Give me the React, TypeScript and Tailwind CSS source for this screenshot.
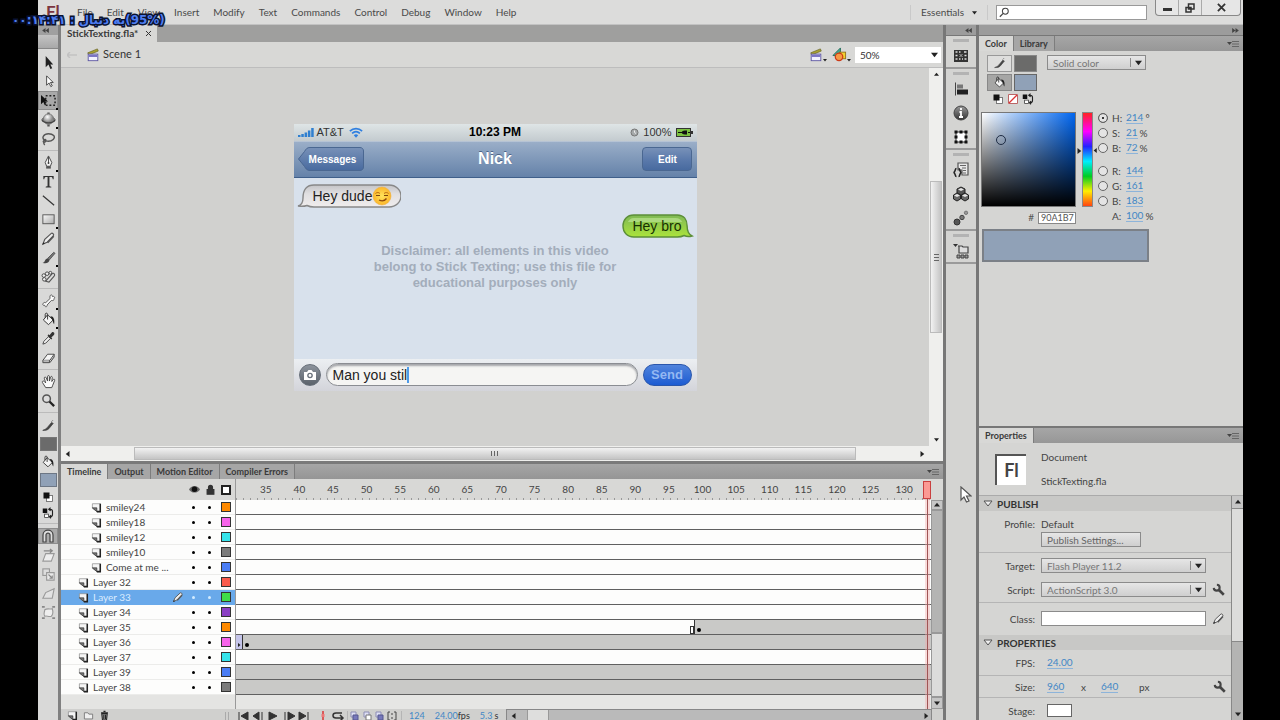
import React, { useState } from 'react';
import clsx from 'clsx';

const menus = ['File', 'Edit', 'View', 'Insert', 'Modify', 'Text', 'Commands', 'Control', 'Debug', 'Window', 'Help'];

const layers = [
  { name: 'smiley24', color: 'bg-[#ff8a00]', nested: true, frames: 'empty' },
  { name: 'smiley18', color: 'bg-[#f763ea]', nested: true, frames: 'empty' },
  { name: 'smiley12', color: 'bg-[#35e3ea]', nested: true, frames: 'empty' },
  { name: 'smiley10', color: 'bg-[#7b7b7b]', nested: true, frames: 'empty' },
  { name: 'Come at me ...', color: 'bg-[#4a7df5]', nested: true, frames: 'empty' },
  { name: 'Layer 32', color: 'bg-[#fa5a4c]', nested: false, frames: 'empty' },
  { name: 'Layer 33', color: 'bg-[#3fdc49]', nested: false, frames: 'empty' },
  { name: 'Layer 34', color: 'bg-[#8a3fc4]', nested: false, frames: 'empty' },
  { name: 'Layer 35', color: 'bg-[#ff8a00]', nested: false, frames: 'split' },
  { name: 'Layer 36', color: 'bg-[#f763ea]', nested: false, frames: 'key' },
  { name: 'Layer 37', color: 'bg-[#35e3ea]', nested: false, frames: 'empty' },
  { name: 'Layer 39', color: 'bg-[#4a7df5]', nested: false, frames: 'filled' },
  { name: 'Layer 38', color: 'bg-[#7b7b7b]', nested: false, frames: 'filled' },
];

const frameNumbers = Array.from({ length: 20 }, (_, i) => 35 + i * 5);

const toolGroups = [
  ['select', 'subselect', 'transform', 'rotate3d', 'lasso'],
  ['pen', 'text', 'line', 'rect', 'pencil', 'brush', 'deco'],
  ['bone', 'bucket', 'eyedropper', 'eraser'],
  ['hand', 'zoom'],
];
const withFlyout = ['transform', 'rotate3d', 'pen', 'rect', 'brush', 'bone', 'bucket'];

const dark = '#333';

const shapes: Record<string, React.ReactNode> = {
  select: <path d="M5 1v12l3-3 2 5 2-1-2-4h3z" fill="#222" />,
  subselect: <path d="M6 2v10l2.5-2.5 2 4 1.5-1-2-3.500h3z" fill="#fff" stroke="#333" strokeWidth=".9" />,
  transform: (
    <>
      <rect x="5" y="3" width="10" height="10" fill="none" stroke="#222" strokeWidth="1.600" strokeDasharray="2 2" />
      <path d="M0 2v10l2.500-2.500 1.500 3.500 1.500-.7L4 9h3.500z" fill="#111" />
    </>
  ),
  rotate3d: (
    <>
      <path d="M1 8c0-3 14-3 14 0s-14 3-14 0z" fill="#999" stroke="#555" />
      <path d="M8 .500v3M8 13v2.500" stroke="#555" strokeWidth="2.500" />
      <circle cx="8" cy="7.500" r="5.500" fill="url(#ball)" stroke="#777" />
      <path d="M1 8.500c2 4 12 4 14 0" fill="none" stroke="#444" strokeWidth="1.300" />
    </>
  ),
  lasso: <path d="M4 10C0 7 3 3 8 3s8 3 5 6-8 2-9 1c-2 0-2 2-.5 2S6 9.500 4.500 9 2 13 4 15" fill="none" stroke="#555" strokeWidth="1.500" />,
  pen: (
    <>
      <path d="M8 1 4.500 8 6 12h4l1.500-4z" fill="#f5f5f5" stroke="#444" />
      <path d="M8 2v6" stroke="#444" />
      <circle cx="8" cy="8.500" r="1" fill="#333" />
      <path d="M5.500 12h5v2.500h-5z" fill="#555" />
    </>
  ),
  text: <path d="M2.500 2h11v3.500h-1c-.3-1.700-.8-2.200-2-2.200H9v9c0 1 .5 1.200 2 1.200v1H5v-1c1.500 0 2-.2 2-1.200v-9H5.500c-1.200 0-1.700.5-2 2.200h-1z" fill={dark} />,
  line: <path d="m2 3 12 10" stroke={dark} strokeWidth="1.300" />,
  rect: <rect x="2" y="3" width="12" height="9.500" fill="url(#plate)" stroke="#555" />,
  pencil: (
    <>
      <path d="M2 14 4 9l7-6.500c1-.8 3.200 1.200 2.300 2.400L6.500 12z" fill="#eee" stroke="#555" strokeWidth="1.200" />
      <path d="m7 12.500 6.500-7" stroke="#555" strokeWidth="1.800" />
      <path d="m1.500 14.500 1-2.500 1.500 1.500z" fill="#222" />
    </>
  ),
  brush: (
    <>
      <path d="m7 9 6.500-6.500 1.500 1-6 7z" fill="#777" stroke="#444" strokeWidth=".8" />
      <path d="M1.500 13.500c3 .5 2-4 5.500-4.500l2 1.500c0 3-3.500 4.500-7.500 3z" fill="#444" />
    </>
  ),
  deco: (
    <>
      <path d="m5 13 7-8c1.500-1.500 3.500 1 2 2.500L8.500 14z" fill="#ddd" stroke="#555" strokeWidth="1.200" />
      <circle cx="3" cy="7" r="1.900" fill="#eee" stroke="#444" />
      <circle cx="6.500" cy="5" r="1.900" fill="#eee" stroke="#444" />
      <circle cx="10" cy="4" r="1.500" fill="#eee" stroke="#444" />
      <circle cx="3.500" cy="11" r="1.900" fill="#eee" stroke="#444" />
    </>
  ),
  bone: <path d="M2.500 11c-1.500 1 0 3 1.500 2 0 2.500 3 2 2.500-.2L11 8c1 .5 3.500-.2 3-2 1.500-1.500-.5-3-1.800-2.200C12.500 1.500 9.500 1.500 9.500 4c0 .8 0 1.200.3 1.700L5 10.300c-.8-.5-2.300-.3-2.500.7z" fill="#fafafa" stroke="#555" />,
  bucket: (
    <>
      <path d="m7 3 6 5.500-5 5L2.500 8.500z" fill="#f4f4f4" stroke="#333" />
      <path d="M10 4.500c3-.5 5 3 4 8.500-1.500-1.500-1-4-2.500-5.500z" fill="#222" />
      <path d="M7 8V2.500C7 .8 4.500.8 4.500 2.500V6" fill="none" stroke="#333" />
    </>
  ),
  eyedropper: (
    <>
      <path d="m2 14 1-3 5-5 2 2-5 5z" fill="#eee" stroke="#444" />
      <path d="m7 5 4 4 1-1-1-1 3-3c1-2-1-3.500-2.500-2.500l-2.500 3-1-1z" fill="#333" />
    </>
  ),
  eraser: (
    <>
      <path d="m2 11 5-6.500h7L9.500 11z" fill="#f5f5f5" stroke="#444" />
      <path d="M2 11v2.500h7V11M9.500 13.500 14 7.500v-3" fill="#bbb" stroke="#444" />
    </>
  ),
  hand: <path d="M5 14.500 1.500 9C1 7.500 2.500 7 3.500 8L5 9.500 3.500 4.500c-.2-1.500 1.500-1.700 2-.5L7 7.500V2.800C7 1.300 9 1.300 9 2.800V7.500l1.200-4.200c.4-1.300 2-.8 1.800.5L11.500 8l1.500-2c.8-1 2-.3 1.500 1L12.500 12l-1 2.500z" fill="#fafafa" stroke="#444" />,
  zoom: (
    <>
      <circle cx="6" cy="6" r="4" fill="#ddd" stroke="#555" strokeWidth="1.600" />
      <path d="m9 9 5 5" stroke="#222" strokeWidth="2.400" />
    </>
  ),
  stroke: <path d="M2 13c2-1 3-1 5-3l5-6 2 1-5 6c-2 2-4 2-7 2zM12 3l1.500-1.500" fill="#444" stroke="#444" strokeWidth=".8" />,
  bw: (
    <>
      <rect x="6" y="6" width="8" height="8" fill="#fff" stroke="#555" />
      <rect x="2" y="2" width="8" height="8" fill="#111" />
    </>
  ),
  swap: (
    <>
      <rect x="1" y="2" width="6" height="6" fill="#111" />
      <rect x="3.500" y="9.500" width="5" height="4.500" fill="#fff" stroke="#333" />
      <path d="M9 3h2c2.500 0 3 2 3 3v4c0 2-1 3-3 3M11.500 1 9 3l2.500 2M12 11l-2 2 2 2" fill="none" stroke="#222" strokeWidth="1.500" />
    </>
  ),
  magnet: <path d="M3 14V7c0-6.500 10-6.500 10 0v7h-3V7c0-2.500-4-2.500-4 0v7z" fill="#ddd" stroke="#444" strokeWidth="1.200" />,
  smooth: (
    <>
      <path d="m2 14 3-8h9l-3 8z" fill="#eee" stroke="#999" strokeWidth="1.200" />
      <path d="M3 3h9M9.500 1 12 3 9.500 5" fill="none" stroke="#888" strokeWidth="1.300" />
    </>
  ),
  straighten: (
    <>
      <rect x="2" y="2" width="7" height="7" fill="#ddd" stroke="#999" strokeWidth="1.200" />
      <path d="M6 6h8v8H6z" fill="#e9e9e9" stroke="#999" strokeWidth="1.200" />
      <path d="m8 8 4 4m0-3v3H9" fill="none" stroke="#888" strokeWidth="1.200" />
    </>
  ),
  skew: <path d="m2 13 3-6 9-4-2 10z" fill="#e2e2e2" stroke="#999" strokeWidth="1.200" />,
  envelope: (
    <>
      <path d="M1 2h3M12 2h3M1 14h3M12 14h3" stroke="#888" strokeWidth="2" />
      <path d="M4 5c3-2 7 0 8-1 1 3 1 6-1 8-3 1-5-1-7 0-2-3 0-4 0-7z" fill="#eee" stroke="#999" strokeWidth="1.200" />
    </>
  ),
  swatches: (
    <>
      <rect x="1" y="2" width="14" height="12" fill="#333" />
      <path d="M2.500 4h2M6 4h1.500M11 4h2.500M2.500 7.500h2M2.500 11h2M6 11h1.500M9 11h1M11.500 11h2M11.500 7.500h2" stroke="#ddd" strokeWidth="1.500" />
      <path d="m6.500 6 3 3m0-3-3 3" stroke="#aaa" />
    </>
  ),
  align: (
    <>
      <path d="M2.500 1.500v13" stroke="#444" />
      <path d="M4 3.500h6v4H4z" fill="#777" />
      <path d="M4 8.500h11v5H4z" fill="#222" />
    </>
  ),
  info: (
    <>
      <circle cx="8" cy="8" r="7" fill="url(#dome)" stroke="#444" />
      <path d="M8 3v2M6.500 7H8v5M6 12h4" fill="none" stroke="#fff" strokeWidth="1.800" />
    </>
  ),
  transformPanel: (
    <>
      <rect x="3" y="3" width="10" height="10" fill="#fff" stroke="#333" />
      <path d="M1.500 3h3M6.500 3h3M11.500 3h3M1.500 8h3M11.500 8h3M1.500 13h3M6.500 13h3M11.500 13h3" stroke="#111" strokeWidth="3" />
    </>
  ),
  snippets: (
    <>
      <path d="M5 1h10v12H9V8H5z" fill="#e8e8e8" stroke="#555" strokeWidth="1.200" />
      <path d="M7 3.500h6M9 6h4M10 8.500h3M10 11h3" stroke="#666" />
      <path d="M3.500 6.500C1.500 6.500 3 10 .5 10.500c2.500.5 1 4 3 4M5.500 6.500c2 0 .5 3.500 3 4-2.500.5-1 4-3 4" fill="none" stroke="#222" strokeWidth="1.600" />
    </>
  ),
  components: (
    <>
      <path d="m8 1 4 2v4L8 9 4 7V3z" fill="#555" stroke="#222" />
      <path d="m4 7 3.500 2v4L4 15 .5 13V9zM12 7l3.500 2v4L12 15l-3.500-2V9z" fill="#666" stroke="#222" />
      <path d="m8 2 3 1.500L8 5 5 3.500zM4 8l3 1.500L4 11 1 9.500zM12 8l3 1.500-3 1.500-3-1.500z" fill="#e5e5e5" />
    </>
  ),
  motion: (
    <>
      <circle cx="4" cy="12" r="3" fill="#555" stroke="#333" />
      <circle cx="9" cy="7.500" r="2.200" fill="#777" stroke="#444" />
      <circle cx="13" cy="2.800" r="1.700" fill="#999" stroke="#777" />
    </>
  ),
  project: (
    <>
      <path d="M0 1h5L2.500 4z" fill="#333" />
      <path d="M5 3h4l1 1h5v6H6V3" fill="#ddd" stroke="#444" strokeWidth="1.200" />
      <path d="M4 12h3v3H4zM8 12h3v3H8zM12 12h3v3h-3z" fill="#999" stroke="#444" />
    </>
  ),
  clapper: (
    <>
      <path d="M2 5.500 13 1l1 2.500L3 8z" fill="#a8a232" stroke="#5f5b18" strokeWidth=".7" />
      <rect x="2.500" y="7" width="11" height="7.500" fill="#f2f2ff" stroke="#5a53a0" />
      <path d="M3 9h10" stroke="#7b74c4" strokeWidth="2.500" />
    </>
  ),
  symbols: (
    <>
      <path d="M1 9 9 1v9z" fill="#3fa892" stroke="#27705f" />
      <rect x="8" y="5.500" width="6.500" height="7" fill="#f2d02e" stroke="#97751b" />
      <circle cx="7.500" cy="10.500" r="4" fill="#f59b45" stroke="#cc3a17" strokeWidth="1.300" />
    </>
  ),
  layer: (
    <>
      <path d="M2 2.500h11.500V14H9L2 9z" fill="#f5f5f5" stroke="#888" />
      <path d="M13.500 2.500V14H8.500" fill="none" stroke="#222" strokeWidth="2.200" />
      <path d="M2 8.500h6.500V14z" fill="#777" stroke="#333" />
    </>
  ),
  folder: <path d="M2 4h5l1.500 2H14v7H2z" fill="#eee" stroke="#777" strokeWidth="1.300" />,
  trash: <path d="M3 4h10M6.500 2h3M4 5.500h8l-1 9H5zM7 7v6M9.500 7v6" fill="#999" stroke="#222" strokeWidth="1.500" />,
  eye: (
    <>
      <path d="M0 8c3-7 13-7 16 0-3 6-13 6-16 0z" fill="#666" />
      <circle cx="8" cy="7.500" r="4" fill="#111" />
    </>
  ),
  lock: <path d="M5 8V5c0-4 6-4 6 0v3M3 8h10v7H3z" fill="#333" stroke="#333" strokeWidth="1.500" />,
  wrench: (
    <>
      <path d="M6 2.200A3.600 3.600 0 1 1 2.200 6" fill="none" stroke="#444" strokeWidth="2.600" />
      <path d="m8 8 6.500 6.500" stroke="#444" strokeWidth="3.200" />
    </>
  ),
};

function Icon({ name, className = 'size-4' }: { name: string; className?: string }) {
  return (
    <svg viewBox="0 0 16 16" className={clsx('shrink-0', className)} aria-hidden="true">
      {shapes[name]}
    </svg>
  );
}

function Caret({ dir = 'down', className = 'size-[7px]' }: { dir?: string; className?: string }) {
  const d: Record<string, string> = {
    down: 'M0 2h8L4 7z',
    up: 'M0 6h8L4 1z',
    left: 'M6 0v8L1 4z',
    right: 'M2 0v8l5-4z',
  };
  return (
    <svg viewBox="0 0 8 8" className={clsx('shrink-0', className)} aria-hidden="true">
      <path d={d[dir]} fill="#222" />
    </svg>
  );
}

function DoubleArrow({ flip = false }) {
  return (
    <svg viewBox="0 0 8 6" className={clsx('h-[5px] w-[7px]', flip && 'rotate-180')} aria-hidden="true">
      <path d="M4 0v6L0 3zM8 0v6L4 3z" fill="#444" />
    </svg>
  );
}

function PanelMenu() {
  return (
    <button aria-label="Panel menu" className="ml-auto mr-1 flex items-center">
      <svg viewBox="0 0 12 8" className="h-2 w-3" aria-hidden="true">
        <path d="M0 2h5L2.500 5z" fill="#444" />
        <path d="M5 1.500h7M5 4h7M5 6.500h7" stroke="#666" />
      </svg>
    </button>
  );
}

function Tab({ label, active = false }: { label: string; active?: boolean }) {
  return (
    <button
      className={clsx(
        'h-full border-r border-[#7d7d7d] px-[6px] text-[9px] font-bold leading-3 text-[#3a3a3a]',
        active ? 'bg-[#d8d8d6]' : 'bg-[#a6a6a6]'
      )}
    >
      {label}
    </button>
  );
}

function Dropdown({ label, value, className }: { label: string; value: string; className: string }) {
  return (
    <div className={clsx('relative flex items-center', className)}>
      <select
        aria-label={label}
        className="h-[15px] w-full appearance-none border border-[#8b8b8b] bg-linear-to-b from-[#e6e6e6] to-[#cfcfcf] pl-[5px] text-[10px] leading-3 text-[#777]"
      >
        <option>{value}</option>
      </select>
      <span className="pointer-events-none absolute right-0 flex h-[9px] w-4 items-center justify-center border-l border-[#8b8b8b]">
        <Caret />
      </span>
    </div>
  );
}

function HotText({ children }: { children: React.ReactNode }) {
  return <button className="border-b border-[#8db4da] leading-[11px] text-[#4287c6]">{children}</button>;
}

function MenuBar() {
  return (
    <header className="flex h-[25px] shrink-0 items-center border-b border-[#c2c2c2] bg-[#dcdcdb] text-[10px] text-[#4a4a4a]">
      <span className="w-8 pl-2 text-[17px] font-bold leading-5 text-[#7b3540]">Fl</span>
      <nav className="flex gap-[14px] pl-[7px]">
        {menus.map(m => (
          <button key={m}>{m}</button>
        ))}
      </nav>
      <button className="ml-auto flex items-center gap-2 border-x border-[#c9c9c9] px-[10px]">
        Essentials
        <Caret className="size-[5px]" />
      </button>
      <label className="ml-2 flex h-[15px] w-[151px] items-center border border-[#999] bg-white">
        <svg viewBox="0 0 12 12" className="ml-[2px] size-[11px]" aria-label="Search">
          <circle cx="7.500" cy="4.500" r="3.500" fill="none" stroke="#444" strokeWidth="1.200" />
          <path d="m5 7-4 4" stroke="#444" strokeWidth="1.500" />
        </svg>
        <input aria-label="Search help" className="w-full min-w-0 outline-none" />
      </label>
      <div className="ml-2 mr-[2px] flex h-4 self-start rounded-b-sm border border-t-0 border-[#888] bg-[#e6e6e6]">
        <button aria-label="Minimize" className="flex w-[23px] items-center justify-center border-r border-[#aaa]">
          <span className="mt-1 h-[3px] w-[9px] bg-[#333]" />
        </button>
        <button aria-label="Restore" className="flex w-[23px] items-center justify-center border-r border-[#aaa]">
          <svg viewBox="0 0 10 10" className="size-[10px]">
            <path d="M3.500 1h5.500v5H3.500zM1 4.500h5V9H1z" fill="#e6e6e6" stroke="#333" strokeWidth="1.500" />
          </svg>
        </button>
        <button aria-label="Close" className="flex w-[38px] items-center justify-center">
          <svg viewBox="0 0 10 10" className="size-[9px]">
            <path d="m1 1 8 8m0-8L1 9" stroke="#333" strokeWidth="2" />
          </svg>
        </button>
      </div>
    </header>
  );
}

function Toolbar() {
  const [tool, setTool] = useState('transform');
  return (
    <aside className="flex w-[23px] shrink-0 flex-col border-r-[3px] border-[#808080] bg-[#d9d9d8]">
      <div className="flex h-[10px] shrink-0 items-center bg-[#a0a0a0] pl-1">
        <DoubleArrow />
      </div>
      <div className="h-[14px] shrink-0 border-b border-[#888] bg-linear-to-b from-[#c4c4c4] to-[#a8a8a8]" />
      <div className="flex flex-col pt-1">
        {toolGroups.map(group => (
          <div key={group[0]} className="mb-[2px] border-b border-[#bbb] pb-[2px]">
            {group.map(t => (
              <button
                key={t}
                aria-label={t}
                onClick={() => setTool(t)}
                className={clsx(
                  'relative flex h-[19px] w-full items-center justify-center',
                  tool === t && 'bg-[#a9a9a9] ring-1 ring-inset ring-[#8d8d8d]'
                )}
              >
                <Icon name={t} className="size-[15px]" />
                {withFlyout.includes(t) && <span className="absolute bottom-0 right-0 size-[2px] bg-black" />}
              </button>
            ))}
          </div>
        ))}
        <div className="flex flex-col items-center gap-1 border-b border-[#bbb] pb-1 pt-1">
          <Icon name="stroke" className="size-[14px]" />
          <button aria-label="Stroke color" className="h-[14px] w-[17px] border border-[#777] bg-[#6b6b6b]" />
          <Icon name="bucket" className="size-[14px]" />
          <button aria-label="Fill color" className="h-[14px] w-[17px] border border-[#6d7785] bg-[#90a1b7]" />
          <button aria-label="Black and white">
            <Icon name="bw" className="size-3" />
          </button>
          <button aria-label="Swap colors">
            <Icon name="swap" className="size-3" />
          </button>
        </div>
        <div className="flex flex-col items-center gap-1 pt-1">
          <button aria-label="Snap" className="flex w-full justify-center bg-[#a9a9a9] ring-1 ring-inset ring-[#8d8d8d]">
            <Icon name="magnet" />
          </button>
          {['smooth', 'straighten', 'skew', 'envelope'].map(t => (
            <button key={t} aria-label={t}>
              <Icon name={t} className="size-[15px]" />
            </button>
          ))}
        </div>
      </div>
    </aside>
  );
}

function Smirk() {
  return (
    <svg viewBox="0 0 20 20" className="size-5" aria-label="smirk">
      <circle cx="10" cy="10" r="9" fill="url(#face)" stroke="#f0b040" strokeWidth=".6" />
      <path d="M3.500 7.500c1.500-1.500 3.500-1 4.500 0M12 7.500c1.500-1.500 3.500-1 4.500 0" fill="none" stroke="#b8690f" />
      <path d="M4 9.500h4M12 9.500h4" stroke="#7d450d" strokeWidth="1.200" />
      <path d="M7 14c3 1.500 6 .5 7.500-1.500" fill="none" stroke="#8f470a" strokeWidth="1.300" />
    </svg>
  );
}

function Phone() {
  const [text, setText] = useState('Man you stil');
  return (
    <div className="flex h-[267px] w-[403px] shrink-0 flex-col bg-[#d8e1ec] font-['Liberation_Sans',sans-serif]">
      <div className="flex h-[17px] items-center bg-linear-to-b from-[#dfe5e6] to-[#c3cbcf] px-1 text-[#333]">
        <div className="flex flex-1 items-center gap-[3px]">
          <svg viewBox="0 0 16 9" className="h-[9px] w-4" aria-hidden="true">
            <path d="M0 7h2.500v2H0zM3.300 6h2.500v3H3.300zM6.600 4.500h2.500V9H6.600zM9.900 2.500h2.500V9H9.900zM13.200 0h2.500v9h-2.500z" fill="#2f7fd0" />
          </svg>
          <span className="text-[11px]">AT&amp;T</span>
          <svg viewBox="0 0 16 12" className="ml-[2px] h-[11px] w-[14px]" aria-hidden="true">
            <path d="M1 4.500c4-4 10-4 14 0M3.500 7c3-2.700 6-2.700 9 0" fill="none" stroke="#2f7fe0" strokeWidth="1.900" />
            <path d="M5.500 9c1.500-1.500 3.500-1.500 5 0L8 12z" fill="#2f7fe0" />
          </svg>
        </div>
        <span className="text-xs font-bold text-black">10:23 PM</span>
        <div className="flex flex-1 items-center justify-end gap-1">
          <svg viewBox="0 0 9 9" className="size-[9px]" aria-hidden="true">
            <circle cx="4.500" cy="4.500" r="3.500" fill="#a5a9aa" stroke="#777" />
            <path d="M4.500 2.500v2l1.500 1" fill="none" stroke="#eee" />
          </svg>
          <span className="text-[11px]">100%</span>
          <svg viewBox="0 0 17 9" className="h-[9px] w-[17px]" aria-hidden="true">
            <rect x=".5" y=".5" width="14" height="8" fill="#7cc242" stroke="#333" />
            <path d="M15 3h2v3h-2z" fill="#333" />
            <path d="M2 4.500h4M12 4.500h2" stroke="#111" />
            <path d="M5.500 4.500C6.500 2.500 8 2.500 11 2.500v4c-3 0-4.500 0-5.500-2z" fill="#111" />
          </svg>
        </div>
      </div>
      <div className="flex h-[37px] items-center justify-between border-b border-[#3f5f8a] border-t border-t-[#b6c3d4] bg-linear-to-b from-[#9aaec8] to-[#6582a9] px-1">
        <button className="relative flex h-6 w-[66px] items-center justify-center text-[10px] font-bold text-white">
          <svg viewBox="0 0 66 24" className="absolute inset-0 size-full" aria-hidden="true">
            <path d="M12 .5h50c2 0 3.500 1.500 3.500 3.500v16c0 2-1.500 3.500-3.500 3.500H12c-3 0-4-1.500-5.500-4L.5 12 6.500 4.500C8 2 9 .5 12 .5z" fill="url(#navBtn)" stroke="#4a6791" />
          </svg>
          <span className="relative pl-1">Messages</span>
        </button>
        <h1 className="pr-4 text-base font-bold text-white [text-shadow:0_-1px_0_#4c6488]">Nick</h1>
        <button className="h-6 w-[50px] rounded border border-[#4a6791] bg-linear-to-b from-[#7891b8] via-[#5c7bac] to-[#486a9f] text-[10px] font-bold text-white">
          Edit
        </button>
      </div>
      <div className="flex flex-1 flex-col px-[3px] pt-[6px]">
        <div className="flex">
          <div className="relative flex h-6 items-center pl-4 pr-[9px] text-sm text-[#222]">
            <svg viewBox="0 0 105 24" preserveAspectRatio="none" className="absolute inset-0 size-full" aria-hidden="true">
              <path d="M17 1h75c7 0 12 5 12 11s-5 11-12 11H17c-3 0-5-.5-7-1.500-3 1-6 1-9 .5 4-1 5-4 5-8C6 5 10 1 17 1z" fill="url(#greyBubble)" stroke="#888" strokeWidth="1.400" />
            </svg>
            <span className="relative">Hey dude</span>
            <span className="relative">
              <Smirk />
            </span>
          </div>
        </div>
        <div className="mt-[6px] flex justify-end">
          <div className="relative flex h-6 items-center pl-[10px] pr-3 text-sm text-[#173000]">
            <svg viewBox="0 0 72 24" preserveAspectRatio="none" className="absolute inset-0 size-full" aria-hidden="true">
              <path d="M12 1h44c7 0 10 5 10 11 0 5 1 8 5 10-3 .8-6 .5-8-.5-2 1-4 1.500-7 1.500H12C5 23 1 18 1 12S5 1 12 1z" fill="url(#greenBubble)" stroke="#5c8f38" strokeWidth="1.400" />
              <path d="M12 4h42c4 0 6 2 7 4H6c1-2 3-4 6-4z" fill="#c3e89d" opacity=".6" />
            </svg>
            <span className="relative">Hey bro</span>
          </div>
        </div>
        <p className="mx-auto mt-[5px] w-[270px] text-center text-[13px] font-bold leading-4 text-[#a3adbb]">
          Disclaimer: all elements in this video belong to Stick Texting; use this file for educational purposes only
        </p>
      </div>
      <div className="flex h-8 items-center gap-[5px] bg-linear-to-b from-[#eceff2] to-[#d3d4da] px-[5px]">
        <button aria-label="Camera" className="flex size-[22px] items-center justify-center rounded-full border border-[#666e78] bg-linear-to-b from-[#8d949d] to-[#5b626b]">
          <svg viewBox="0 0 14 12" className="h-3 w-[14px]" aria-hidden="true">
            <path d="M1 3h3l1.500-2h3L10 3h3v8H1z" fill="#fff" />
            <circle cx="7" cy="6.500" r="2.800" fill="#6b737d" />
            <circle cx="7" cy="6.500" r="1.400" fill="#fff" />
          </svg>
        </button>
        <label className="flex h-[23px] flex-1 items-center rounded-full border border-[#8a8d92] bg-[#f5f5f3] pl-[6px] shadow-[inset_0_2px_2px_#a4a6aa]">
          <input
            aria-label="Message"
            value={text}
            onChange={e => setText(e.target.value)}
            className="field-sizing-content bg-transparent text-sm text-[#222] outline-none"
          />
          <span className="h-4 w-[2px] bg-[#4f9be8]" />
        </label>
        <button className="h-[22px] w-[49px] rounded-full border border-[#2a56ab] bg-linear-to-b from-[#4f83dc] to-[#1c5bd2] text-[13px] font-bold leading-4 text-[#94b8f2]">
          Send
        </button>
      </div>
    </div>
  );
}

function Stage() {
  return (
    <section className="flex min-h-0 flex-1 flex-col">
      <div className="flex h-[17px] shrink-0 bg-[#9f9f9e]">
        <div className="flex items-center gap-2 bg-[#d8d8d6] px-[6px] text-[10px] font-bold text-[#3a3a3a]">
          StickTexting.fla*
          <button aria-label="Close tab">
            <svg viewBox="0 0 6 6" className="size-[5px]">
              <path d="m0 0 6 6m0-6L0 6" stroke="#333" strokeWidth="1.200" />
            </svg>
          </button>
        </div>
      </div>
      <div className="flex h-[26px] shrink-0 items-center border-b border-[#bdbdbd] bg-[#d8d8d6] text-[#333]">
        <svg viewBox="0 0 10 6" className="ml-[6px] h-[6px] w-[10px]" aria-hidden="true">
          <path d="M0 3h10M3 0 0 3l3 3" fill="none" stroke="#c2c2c2" strokeWidth="1.500" />
        </svg>
        <Icon name="clapper" className="ml-[9px] size-[14px]" />
        <span className="ml-[3px] text-[11px]">Scene 1</span>
        <button aria-label="Edit scene" className="ml-auto flex items-end">
          <Icon name="clapper" className="size-[14px]" />
          <Caret className="size-1" />
        </button>
        <button aria-label="Edit symbols" className="ml-[5px] flex items-end">
          <Icon name="symbols" className="size-[15px]" />
          <Caret className="size-1" />
        </button>
        <div className="relative ml-1 mr-[2px] flex items-center">
          <select aria-label="Zoom" className="h-4 w-[86px] appearance-none bg-white pl-[5px] text-[10px] leading-3">
            <option>50%</option>
          </select>
          <span className="pointer-events-none absolute right-[3px]">
            <Caret />
          </span>
        </div>
      </div>
      <div className="flex min-h-0 flex-1">
        <div className="flex min-w-0 flex-1 items-center justify-center bg-[#d1d1cf]">
          <Phone />
        </div>
        <div className="flex w-[14px] flex-col items-center justify-between bg-[#efefed] py-1">
          <Caret dir="up" className="size-[5px]" />
          <div className="flex h-[152px] w-[12px] items-center justify-center border border-[#bbb] bg-linear-to-r from-[#f2f2f2] to-[#c4c4c4]">
            <span className="h-[7px] w-[5px] bg-[repeating-linear-gradient(#666_0_1px,transparent_1px_3px)]" />
          </div>
          <Caret className="size-[5px]" />
        </div>
      </div>
      <div className="flex h-[15px] shrink-0 items-center justify-between bg-[#efefed] pl-1 pr-[18px]">
        <Caret dir="left" className="size-[6px]" />
        <div className="flex h-[13px] w-[84%] items-center justify-center border border-[#bbb] bg-linear-to-b from-[#f2f2f2] to-[#c4c4c4]">
          <span className="h-[5px] w-[7px] bg-[repeating-linear-gradient(90deg,#666_0_1px,transparent_1px_3px)]" />
        </div>
        <Caret dir="right" className="size-[6px]" />
      </div>
    </section>
  );
}

function FrameRow({ kind }: { kind: string }) {
  return (
    <div
      className={clsx(
        'flex h-[15px] items-end border-b border-[#606060]',
        kind === 'filled' || kind === 'key' ? 'bg-[#c9c9c7]' : 'bg-[#fdfdfc]'
      )}
    >
      {kind === 'split' && (
        <>
          <div className="flex h-full w-[66%] items-end justify-end border-r border-[#333]">
            <span className="h-2 w-1 border border-[#333] bg-white" />
          </div>
          <div className="flex h-full flex-1 items-end bg-[#c9c9c7] p-[2px]">
            <span className="size-1 rounded-full bg-black" />
          </div>
        </>
      )}
      {kind === 'key' && (
        <>
          <div className="flex h-full w-[7px] items-end justify-center border-r border-[#333] bg-[#c5c5ea] pb-[2px]">
            <Caret dir="right" className="size-1" />
          </div>
          <span className="m-[2px] size-1 rounded-full bg-black" />
        </>
      )}
    </div>
  );
}

function Timeline() {
  const [selected, setSelected] = useState('Layer 33');
  return (
    <section className="flex h-[259px] shrink-0 flex-col overflow-hidden border-t-[3px] border-[#7a7a7a] bg-[#d8d8d6]">
      <div className="flex h-[15px] shrink-0 bg-linear-to-b from-[#a6a6a6] to-[#959595]">
        <Tab label="Timeline" active />
        <Tab label="Output" />
        <Tab label="Motion Editor" />
        <Tab label="Compiler Errors" />
        <PanelMenu />
      </div>
      <div className="flex h-[230px] shrink-0">
        <div className="flex w-[174px] shrink-0 flex-col bg-[#e4e4e2]">
          <div className="flex h-[21px] items-center justify-end gap-[5px] bg-[#d8d8d6] pr-1">
            <Icon name="eye" className="size-[11px]" />
            <Icon name="lock" className="size-[11px]" />
            <span className="size-[10px] border-2 border-[#222] bg-white" />
          </div>
          {layers.map(l => {
            const on = l.name === selected;
            return (
              <button
                key={l.name}
                onClick={() => setSelected(l.name)}
                className={clsx(
                  'flex h-[15px] items-center border-b pr-1 text-left text-[10px] leading-3',
                  l.nested ? 'pl-[30px]' : 'pl-[17px]',
                  on ? 'border-[#69a9ea] bg-[#69a9ea] text-[#dcecff]' : 'border-[#ececea] bg-[#fdfdfc] text-[#444]'
                )}
              >
                <Icon name="layer" className="size-[11px]" />
                <span className="ml-1 flex-1">{l.name}</span>
                {on && <Icon name="pencil" className="mr-2 size-3" />}
                <span className={clsx('mr-[13px] size-[3px] rounded-full', on ? 'bg-[#d3ecff]' : 'bg-black')} />
                <span className={clsx('mr-[10px] size-[3px] rounded-full', on ? 'bg-[#d3ecff]' : 'bg-black')} />
                <span className={clsx('size-[10px] border border-[#333]', l.color)} />
              </button>
            );
          })}
        </div>
        <div className="relative flex min-w-0 flex-1 flex-col border-l border-[#999] bg-[#e6e6e4]">
          <div className="flex h-[21px] items-center bg-[#d8d8d6] pl-[13px] pr-[10px] text-[10px] text-[#444]">
            {frameNumbers.map(n => (
              <span key={n} className="flex-1 text-center">{n}</span>
            ))}
          </div>
          <div className="absolute inset-x-0 top-[19px] h-[2px] bg-[repeating-linear-gradient(90deg,#999_0_1px,transparent_1px_7px)]" />
          {layers.map(l => (
            <FrameRow key={l.name} kind={l.frames} />
          ))}
          <div className="absolute inset-y-0 right-0 flex w-2 flex-col items-center pt-[2px]">
            <span className="h-[18px] w-2 border border-[#c94040] bg-[#fb9a94]" />
            <span className="w-[5px] flex-1 border-x-2 border-[#f3a9a9]/40 bg-[#a05555] bg-clip-padding" />
          </div>
        </div>
        <div className="flex w-[12px] shrink-0 flex-col pt-[21px]">
          <span className="flex h-[10px] items-center justify-center border border-[#999] bg-[#c6c6c6]">
            <Caret dir="up" className="size-[6px]" />
          </span>
          <span className="flex-1 border border-[#999] bg-[#b4b4b3]" />
          <span className="h-16 border border-[#999] bg-[#dcdcdb]" />
          <span className="flex h-3 items-center justify-center border border-[#999] bg-[#c6c6c6]">
            <Caret className="size-[6px]" />
          </span>
        </div>
      </div>
      <div className="flex h-[13px] items-center bg-[#d0d0ce] text-[9px] text-[#333]">
        <div className="flex w-[174px] shrink-0 items-center gap-[5px] pl-[6px]">
          <Icon name="layer" className="size-[11px]" />
          <Icon name="folder" className="size-[11px]" />
          <Icon name="trash" className="size-[11px]" />
          <span className="ml-auto mr-[6px] h-2 w-1 border-x border-[#aaa]" />
        </div>
        <svg viewBox="0 0 168 12" className="h-3 w-[168px] shrink-0" aria-hidden="true">
          <path d="M4 2v8M13 2v8L6 6zM24 2v8l-6-4zM27 2v8M34 2v8l8-4zM50 2v8M53 2v8l7-4zM64 2v8l7-4zM73 2v8" fill="#333" stroke="#333" strokeWidth="1" />
          <path d="M88 1v10" stroke="#d33" strokeWidth="1.500" />
          <path d="M86.500 4h3v3h-3z" fill="#e77" />
          <path d="M106 8h-5c-4 0-4-5 0-5h6M103 8h5M105 5l3 3-3 3" fill="none" stroke="#333" strokeWidth="1.500" />
          <path d="M112.500 1v10M166.500 1v10" stroke="#b5b5b5" />
          <path d="M116 2h5v5h-5zM129 2h5v5h-5zM141 2h5v5h-5z" fill="#dfe0f5" stroke="#8d8db5" />
          <path d="M118 5h5v5h-5zM143 5h5v5h-5z" fill="#7778bb" stroke="#55578f" />
          <path d="M131 5h5v5h-5z" fill="#fff" stroke="#777" />
          <path d="M155 2h-2v8h2M159 2h2v8h-2M157 3v2M157 7v2" fill="none" stroke="#444" />
        </svg>
        <div className="flex items-center gap-[10px] pl-[6px]">
          <HotText>124</HotText>
          <span className="flex">
            <HotText>24.00</HotText>fps
          </span>
          <span className="flex gap-[2px]">
            <HotText>5.3</HotText>s
          </span>
        </div>
        <div className="ml-2 mr-[11px] flex h-full flex-1 border border-[#888] bg-[#bababa]">
          <span className="flex w-5 items-center pl-1">
            <Caret dir="left" className="size-[6px]" />
          </span>
          <span className="w-[22px] border-x border-[#999] bg-[#dededd]" />
          <span className="ml-auto flex items-center pr-[2px]">
            <Caret dir="right" className="size-[6px]" />
          </span>
        </div>
      </div>
    </section>
  );
}

const dockGroups = [['swatches'], ['align', 'info', 'transformPanel'], ['snippets', 'components', 'motion'], ['project']];

function Dock() {
  return (
    <aside className="relative flex w-[36px] shrink-0 flex-col border-x-[3px] border-[#777] bg-[#d4d4d2]">
      <div className="flex h-[11px] items-center justify-end border-b border-[#777] bg-[#9c9c9c] pr-1">
        <DoubleArrow />
      </div>
      {dockGroups.map(g => (
        <div key={g[0]} className="border-b-2 border-[#9a9a9a] pb-[3px] pt-[3px]">
          <span className="mx-auto mb-[6px] block h-[3px] w-4 bg-[#b3b3b3]" />
          <div className="flex flex-col items-center gap-2">
            {g.map(i => (
              <button key={i} aria-label={i}>
                <Icon name={i} />
              </button>
            ))}
          </div>
        </div>
      ))}
      <svg viewBox="0 0 12 18" className="absolute left-[14px] top-[461px] h-[18px] w-3" aria-hidden="true">
        <path d="M1 1v13l3-3 2.500 5 2.500-1-2.500-5H11z" fill="#fff" stroke="#555" strokeWidth="1.200" />
      </svg>
    </aside>
  );
}

const channels = [
  ['H', '214', '°'],
  ['S', '21', '%'],
  ['B', '72', '%'],
  ['R', '144', ''],
  ['G', '161', ''],
  ['B', '183', ''],
];

function ColorPanel() {
  const [channel, setChannel] = useState(0);
  return (
    <section className="flex min-h-0 flex-1 flex-col overflow-hidden bg-[#d5d5d3]">
      <div className="flex h-[15px] shrink-0 bg-linear-to-b from-[#a6a6a6] to-[#979797]">
        <Tab label="Color" active />
        <Tab label="Library" />
        <PanelMenu />
      </div>
      <div className="flex items-start gap-[10px] pl-2 pt-1">
        <div className="grid grid-cols-[25px_23px] gap-x-[2px] gap-y-[2px]">
          <button aria-label="Stroke" className="flex h-[17px] items-center justify-center border border-[#999] bg-[#dededd]">
            <Icon name="stroke" className="size-[13px]" />
          </button>
          <button aria-label="Stroke color" className="border border-[#888] bg-[#6b6b6a]" />
          <button aria-label="Fill" className="flex h-[17px] items-center justify-center border border-[#888] bg-[#a6a6a5]">
            <Icon name="bucket" className="size-[13px]" />
          </button>
          <button aria-label="Fill color" className="border border-[#666] bg-[#90a1b7]" />
          <div className="col-span-2 flex items-center gap-1 pl-[5px]">
            <Icon name="bw" className="size-3" />
            <svg viewBox="0 0 10 10" className="size-[10px]" aria-hidden="true">
              <path d="M.5.500h9v9h-9z" fill="#fff" stroke="#b66" />
              <path d="m1 9 8-8" stroke="#d33" strokeWidth="1.300" />
            </svg>
            <Icon name="swap" className="size-3" />
          </div>
        </div>
        <Dropdown label="Color type" value="Solid color" className="w-[99px]" />
      </div>
      <div className="mt-[7px] flex pl-[2px]">
        <div>
          <div className="relative size-[95px] border border-[#777] bg-[linear-gradient(to_top,#000,transparent),linear-gradient(to_right,#fff,#0066f0)]">
            <span className="absolute left-[14px] top-[22px] size-[10px] rounded-full border border-[#1e2c44]" />
          </div>
          <label className="mt-[3px] flex items-center justify-end gap-1 text-[10px] text-[#555]">
            #
            <input defaultValue="90A1B7" className="h-3 w-[38px] border border-[#888] bg-white pl-[2px] text-[9px] leading-[10px]" />
          </label>
        </div>
        <Caret dir="right" className="mt-[36px] size-[6px]" />
        <div className="h-[95px] w-[11px] border border-[#888] bg-[linear-gradient(#f22,#f0f_20%,#22f_36%,#0ef_52%,#0c2_68%,#fe0_84%,#f41)]" />
        <Caret dir="left" className="mt-[36px] size-[5px]" />
        <div className="flex flex-col text-[10px] leading-3 text-[#444]">
          {channels.map(([name, value, unit], i) => (
            <div key={i} className={clsx('flex h-[15px] items-start', i === 2 && 'mb-2')}>
              <label className="flex items-center">
                <input
                  type="radio"
                  name="channel"
                  checked={channel === i}
                  onChange={() => setChannel(i)}
                  className="size-[10px] appearance-none rounded-full border border-[#666] bg-[#e4e4e4] checked:bg-black checked:shadow-[inset_0_0_0_3px_#e4e4e4]"
                />
                <span className="w-[18px] pl-1">{name}:</span>
              </label>
              <HotText>{value}</HotText>
              <span className="pl-[2px]">{unit}</span>
            </div>
          ))}
          <div className="flex">
            <span className="w-[28px] pl-[14px]">A:</span>
            <HotText>100</HotText>
            <span className="pl-[2px]">%</span>
          </div>
        </div>
      </div>
      <div className="ml-[3px] mt-1 h-[33px] w-[167px] shrink-0 border-2 border-[#7b8087] bg-[#90a1b7]" />
    </section>
  );
}

function Section({ title }: { title: string }) {
  return (
    <h2 className="flex h-[15px] items-center gap-1 bg-[#c8c8c6] pl-1 text-[10px] font-bold text-[#333]">
      <svg viewBox="0 0 10 7" className="h-[7px] w-[10px]" aria-hidden="true">
        <path d="M1 1h8L5 6z" fill="#eee" stroke="#555" />
      </svg>
      {title}
    </h2>
  );
}

function PropertiesPanel() {
  return (
    <section className="flex h-[294px] shrink-0 flex-col overflow-hidden border-t-2 border-[#777] bg-[#d5d5d3] text-[10px] leading-3 text-[#444]">
      <div className="flex h-[15px] shrink-0 bg-linear-to-b from-[#a6a6a6] to-[#979797]">
        <Tab label="Properties" active />
        <PanelMenu />
      </div>
      <div className="flex h-[52px] shrink-0 items-center gap-[15px] pl-4">
        <span className="flex size-[31px] items-center justify-center border-l-2 border-t-2 border-[#555] bg-white text-lg font-bold text-[#444]">Fl</span>
        <div className="flex flex-col gap-3">
          <span>Document</span>
          <span>StickTexting.fla</span>
        </div>
      </div>
      <div className="flex min-h-0 flex-1 border-t border-[#aaa]">
        <div className="min-w-0 flex-1">
          <Section title="PUBLISH" />
          <div className="grid grid-cols-[56px_1fr] gap-x-[6px] border-b border-[#b5b5b5] pb-[5px] pt-[7px]">
            <span className="text-right">Profile:</span>
            <span>Default</span>
            <button className="col-start-2 mt-[2px] h-[15px] w-[100px] border border-[#8b8b8b] bg-linear-to-b from-[#e6e6e6] to-[#cfcfcf] pl-[5px] text-left text-[#666]">
              Publish Settings...
            </button>
          </div>
          <div className="grid grid-cols-[56px_165px_1fr] items-center gap-x-[6px] gap-y-[9px] border-b border-[#b5b5b5] py-[5px]">
            <span className="text-right">Target:</span>
            <Dropdown label="Target" value="Flash Player 11.2" className="w-full" />
            <span />
            <span className="text-right">Script:</span>
            <Dropdown label="Script" value="ActionScript 3.0" className="w-full" />
            <button aria-label="Script settings">
              <Icon name="wrench" className="size-[13px]" />
            </button>
          </div>
          <div className="grid grid-cols-[56px_165px_1fr] items-center gap-x-[6px] pb-[9px] pt-2">
            <label htmlFor="doc-class" className="text-right">Class:</label>
            <input id="doc-class" className="h-[15px] w-full border border-[#8b8b8b] bg-white" />
            <button aria-label="Edit class">
              <Icon name="pencil" className="size-[13px]" />
            </button>
          </div>
          <Section title="PROPERTIES" />
          <div className="flex h-[26px] items-center border-b border-[#b5b5b5]">
            <span className="w-[56px] text-right">FPS:</span>
            <span className="pl-3">
              <HotText>24.00</HotText>
            </span>
          </div>
          <div className="flex h-[22px] items-center border-b border-[#b5b5b5]">
            <span className="w-[56px] text-right">Size:</span>
            <span className="w-[46px] pl-3">
              <HotText>960</HotText>
            </span>
            <span className="w-5">x</span>
            <span className="w-[38px]">
              <HotText>640</HotText>
            </span>
            <span>px</span>
            <button aria-label="Document settings" className="ml-auto mr-[5px]">
              <Icon name="wrench" className="size-[13px]" />
            </button>
          </div>
          <div className="flex items-center gap-3 pt-[6px]">
            <span className="w-[56px] text-right">Stage:</span>
            <button aria-label="Stage color" className="h-[13px] w-[25px] border border-[#666] bg-white" />
          </div>
        </div>
        <div className="flex w-3 shrink-0 flex-col border-l border-[#888]">
          <span className="flex h-[13px] items-center justify-center border-b border-[#888] bg-[#c6c6c6]">
            <Caret dir="up" className="size-[6px]" />
          </span>
          <span className="h-[132px] bg-[#dcdcdb]" />
          <span className="flex-1 border-t border-[#888] bg-[#b4b4b3]" />
          <span className="flex h-3 items-center justify-center bg-[#b4b4b3]">
            <Caret className="size-[6px]" />
          </span>
        </div>
      </div>
    </section>
  );
}

function Gradients() {
  return (
    <svg className="absolute size-0" aria-hidden="true">
      <defs>
        <radialGradient id="ball" cx=".4" cy=".3">
          <stop offset="0" stopColor="#fff" />
          <stop offset="1" stopColor="#888" />
        </radialGradient>
        <linearGradient id="plate" x2="1" y2="1">
          <stop offset="0" stopColor="#fafafa" />
          <stop offset="1" stopColor="#aaa" />
        </linearGradient>
        <linearGradient id="dome" x2="0" y2="1">
          <stop offset="0" stopColor="#999" />
          <stop offset="1" stopColor="#333" />
        </linearGradient>
        <radialGradient id="face">
          <stop offset="0" stopColor="#ffe45c" />
          <stop offset="1" stopColor="#fbb62b" />
        </radialGradient>
        <linearGradient id="navBtn" x2="0" y2="1">
          <stop offset="0" stopColor="#7891b8" />
          <stop offset="1" stopColor="#486a9f" />
        </linearGradient>
        <linearGradient id="greyBubble" x2="0" y2="1">
          <stop offset="0" stopColor="#c4c4c7" />
          <stop offset=".4" stopColor="#e0dfe1" />
          <stop offset="1" stopColor="#f0eded" />
        </linearGradient>
        <linearGradient id="greenBubble" x2="0" y2="1">
          <stop offset="0" stopColor="#7fb955" />
          <stop offset="1" stopColor="#abe33c" />
        </linearGradient>
      </defs>
    </svg>
  );
}

export default function App() {
  return (
    <div className="relative h-screen overflow-hidden bg-black pl-[38px] pr-[37px] font-['Lato',sans-serif]">
      <Gradients />
      <div className="flex h-full flex-col">
        <MenuBar />
        <div className="flex min-h-0 flex-1">
          <Toolbar />
          <main className="flex min-w-0 flex-1 flex-col">
            <Stage />
            <Timeline />
          </main>
          <Dock />
          <div className="flex w-[264px] shrink-0 flex-col">
            <div className="flex h-[11px] shrink-0 items-center justify-end border-b border-[#777] bg-[#9c9c9c] pr-1">
              <DoubleArrow flip />
            </div>
            <ColorPanel />
            <PropertiesPanel />
          </div>
        </div>
      </div>
      <div
        dir="rtl"
        className="absolute left-3 top-3 whitespace-nowrap font-['DejaVu_Sans',sans-serif] text-xs font-bold leading-4 text-[#4d7df0] [-webkit-text-stroke:3px_#0a1230] [paint-order:stroke_fill]"
      >
        <bdi dir="ltr">(95%)</bdi>به دنبال : <bdi dir="ltr">۰۰:۱۴:۴۱</bdi>
      </div>
    </div>
  );
}
